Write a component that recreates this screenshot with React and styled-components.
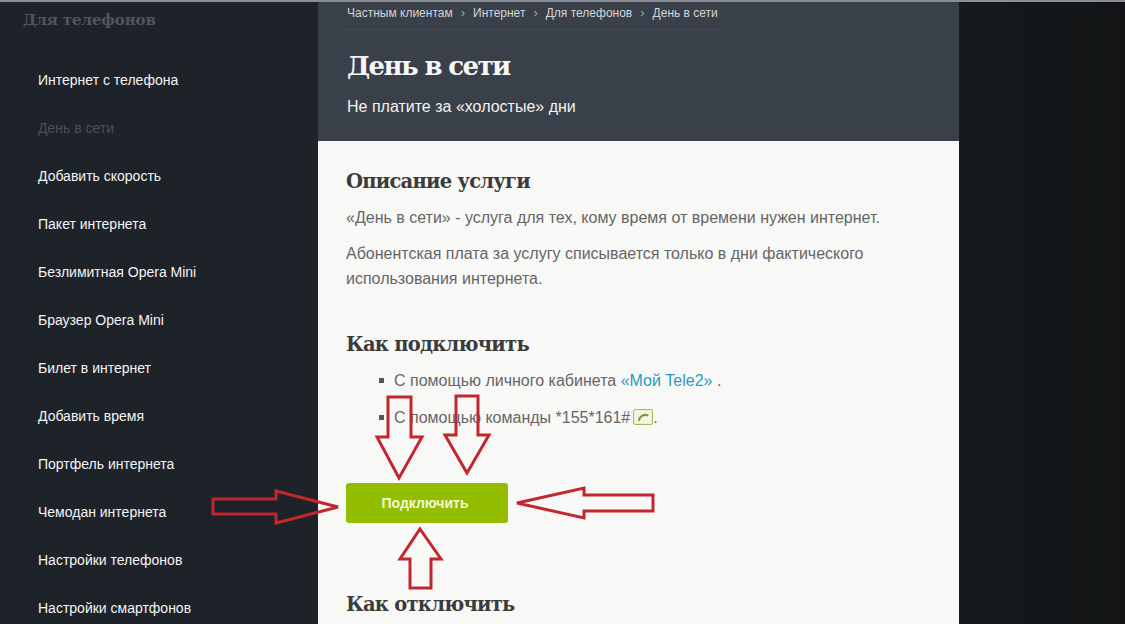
import React from 'react'
import styled, { createGlobalStyle } from 'styled-components'

const GlobalStyle = createGlobalStyle`
  html, body {
    margin: 0;
    padding: 0;
    height: 624px;
    overflow: hidden;
    background: #14171a;
    font-family: "Liberation Sans", Arial, sans-serif;
  }
`

const slab = `"DejaVu Serif", "Liberation Serif", serif`

const Page = styled.div`
  position: relative;
  display: flex;
  width: 1125px;
  height: 624px;
  overflow: hidden;
  border-top: 2px solid #8b8e94;
  box-sizing: border-box;
`

const Sidebar = styled.aside`
  flex: 0 0 318px;
  background: #1e2229;
`

const SideTitle = styled.h2`
  margin: 0;
  padding: 8px 0 0 23px;
  height: 32px;
  font: 700 15px/20px ${slab};
  letter-spacing: -0.1px;
  color: #50555c;
`

const SideList = styled.ul`
  list-style: none;
  margin: 14px 0 0;
  padding: 0 0 0 38px;
`

const SideItem = styled.li`
  height: 48px;
  font-size: 14px;
  line-height: 48px;
  color: ${(p) => (p.$active ? '#4c5057' : '#f4f4f4')};
`

const Main = styled.main`
  flex: 0 0 640px;
  background: #f8f8f7;
`

const Hero = styled.header`
  height: 139px;
  box-sizing: border-box;
  padding: 0 238px 0 26px;
  background: #3a4049;
`

const Crumbs = styled.nav`
  display: flex;
  align-items: center;
  height: 28px;
  padding: 0 3px 6px;
  box-sizing: border-box;
  gap: 8px;
  border-bottom: 1px solid #444a54;
  font-size: 12px;
  color: #d3d5d8;
  white-space: nowrap;
`

const CrumbArrow = styled.span`
  font-size: 13px;
  color: #a3a6ab;
`

const HeroTitle = styled.h1`
  margin: 18px 0 0 3px;
  font: 700 26px/36px ${slab};
  letter-spacing: -1.6px;
  color: #f6f6f6;
`

const HeroLead = styled.p`
  margin: 12px 0 0 3px;
  font-size: 16px;
  line-height: 22px;
  color: #f2f2f2;
  white-space: nowrap;
`

const Content = styled.div`
  padding: 27px 28px 0;
`

const SectionTitle = styled.h2`
  margin: ${(p) => p.$top || 0}px 0 0;
  font: 700 19.5px/28px ${slab};
  letter-spacing: -0.75px;
  color: #3b3b3b;
`

const Text = styled.p`
  margin: ${(p) => p.$top}px 0 0;
  font-size: 16px;
  line-height: 25px;
  color: #666;
`

const Steps = styled.ul`
  list-style: none;
  margin: 9px 0 0;
  padding: 0 0 0 48px;
`

const Step = styled.li`
  position: relative;
  height: 37px;
  font-size: 16px;
  line-height: 25px;
  color: #666;
  white-space: nowrap;

  &::before {
    content: '';
    position: absolute;
    left: -15px;
    top: 10px;
    width: 5px;
    height: 5px;
    background: #555;
  }
`

const StepLink = styled.a`
  color: #2a9bc0;
`

const PhoneBadge = styled.svg`
  display: inline-block;
  width: 20px;
  height: 16px;
  margin-left: 3px;
  vertical-align: -2px;
`

const ConnectButton = styled.button`
  display: block;
  width: 162px;
  height: 40px;
  margin-top: 41px;
  padding: 0 4px 0 0;
  border: 0;
  border-radius: 3px;
  background: #94bd00;
  color: #f1f6d6;
  font: 700 14px "Liberation Sans", Arial, sans-serif;
`

const Backdrop = styled.div`
  flex: 1;
  background: linear-gradient(90deg, #161a20 0%, #14171a 45%, #121415 100%);
`

const Arrows = styled.svg`
  position: absolute;
  left: 0;
  top: -2px;
  width: 1125px;
  height: 624px;
  pointer-events: none;
`

const menu = [
  'Интернет с телефона',
  'День в сети',
  'Добавить скорость',
  'Пакет интернета',
  'Безлимитная Opera Mini',
  'Браузер Opera Mini',
  'Билет в интернет',
  'Добавить время',
  'Портфель интернета',
  'Чемодан интернета',
  'Настройки телефонов',
  'Настройки смартфонов',
]

const crumbs = ['Частным клиентам', 'Интернет', 'Для телефонов', 'День в сети']

const arrowPoints = [
  '388,397 411,397 411,437 422,437 399,478 377,437 388,437',
  '456,396 478,396 478,435 489,435 467,473 445,435 456,435',
  '517,503 584,488 584,495 653,495 653,511 584,511 584,518',
  '420,529 441,559 431,559 431,588 410,588 410,559 400,559',
  '213,499 276,499 276,491 338,507 276,523 276,514 213,514',
]

const App = () => (
  <Page>
    <GlobalStyle />
    <Sidebar>
      <SideTitle>Для телефонов</SideTitle>
      <SideList>
        {menu.map((item) => (
          <SideItem key={item} $active={item === 'День в сети'}>
            {item}
          </SideItem>
        ))}
      </SideList>
    </Sidebar>
    <Main>
      <Hero>
        <Crumbs>
          {crumbs.map((item, i) => (
            <React.Fragment key={item}>
              {i > 0 && <CrumbArrow>›</CrumbArrow>}
              <span>{item}</span>
            </React.Fragment>
          ))}
        </Crumbs>
        <HeroTitle>День в сети</HeroTitle>
        <HeroLead>Не платите за «холостые» дни</HeroLead>
      </Hero>
      <Content>
        <SectionTitle>Описание услуги</SectionTitle>
        <Text $top={9}>«День в сети» - услуга для тех, кому время от времени нужен интернет.</Text>
        <Text $top={11}>
          Абонентская плата за услугу списывается только в дни фактического использования интернета.
        </Text>
        <SectionTitle $top={40}>Как подключить</SectionTitle>
        <Steps>
          <Step>
            С помощью личного кабинета <StepLink>«Мой Tele2»</StepLink> .
          </Step>
          <Step>
            С помощью команды *155*161#
            <PhoneBadge viewBox="0 0 20 16">
              <rect x="0.6" y="0.6" width="18.8" height="14.8" rx="1.5" fill="#f3f5e6" stroke="#9ab544" strokeWidth="1" />
              <path d="M6 11C6.5 7.5 10.5 5 14.5 6.2" fill="none" stroke="#7f9a3a" strokeWidth="2.2" strokeLinecap="round" />
            </PhoneBadge>
            .
          </Step>
        </Steps>
        <ConnectButton>Подключить</ConnectButton>
        <SectionTitle $top={68}>Как отключить</SectionTitle>
      </Content>
    </Main>
    <Backdrop />
    <Arrows viewBox="0 0 1125 624">
      {arrowPoints.map((points) => (
        <polygon key={points} points={points} fill="none" stroke="#c1272d" strokeWidth="3" />
      ))}
    </Arrows>
  </Page>
)

export default App
